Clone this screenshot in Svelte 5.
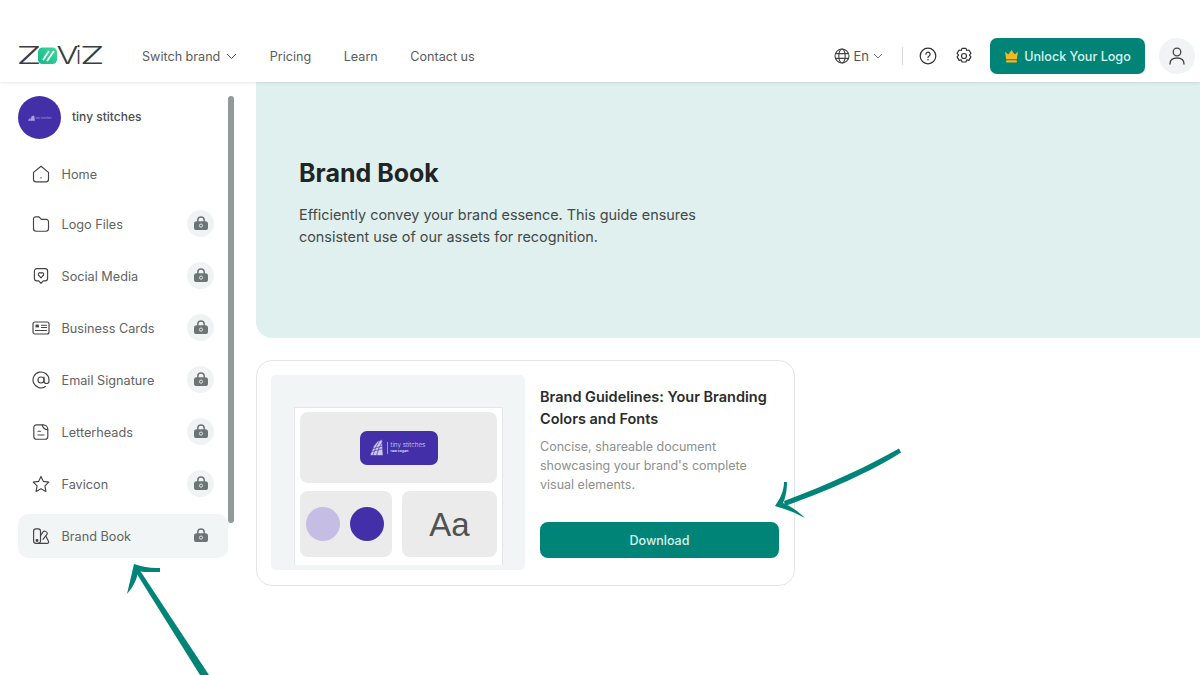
<script>
  const items = [
    { label: 'Home', icon: 'home', locked: false },
    { label: 'Logo Files', icon: 'folder', locked: true },
    { label: 'Social Media', icon: 'social', locked: true },
    { label: 'Business Cards', icon: 'card', locked: true },
    { label: 'Email Signature', icon: 'at', locked: true },
    { label: 'Letterheads', icon: 'letter', locked: true },
    { label: 'Favicon', icon: 'star', locked: true },
    { label: 'Brand Book', icon: 'book', locked: true, active: true }
  ];
</script>

<div class="page">
  <header class="topbar">
    <div class="left">
      <svg class="logo" width="92" height="30" viewBox="-3 -5 92 30" aria-label="ZOVIZ">
        <defs>
          <linearGradient id="lg" x1="0" y1="1" x2="1" y2="0">
            <stop offset="0" stop-color="#12b98a" />
            <stop offset="1" stop-color="#3fd79c" />
          </linearGradient>
        </defs>
        <text x="-1.500" y="18" class="logotext" textLength="25" lengthAdjust="spacingAndGlyphs">Z</text>
        <rect x="20" y="1.500" width="19" height="16.500" rx="4.500" fill="url(#lg)" />
        <path d="M25 14 L31 5 M29 15 L36 5" stroke="#fff" stroke-width="1.800" fill="none" />
        <text x="38.500" y="18" class="logotext" textLength="22" lengthAdjust="spacingAndGlyphs">V</text>
        <text x="58" y="18" class="logotext" textLength="5" lengthAdjust="spacingAndGlyphs">i</text>
        <text x="62" y="18" class="logotext" textLength="24.500" lengthAdjust="spacingAndGlyphs">Z</text>
      </svg>
      <nav class="nav">
        <span class="navitem switch">Switch brand
          <svg width="11" height="7" viewBox="0 0 11 7"><path d="M1 1l4.500 4.500L10 1" fill="none" stroke="#555" stroke-width="1" /></svg>
        </span>
        <span class="navitem">Pricing</span>
        <span class="navitem">Learn</span>
        <span class="navitem">Contact us</span>
      </nav>
    </div>
    <div class="right">
      <span class="lang">
        <svg width="16" height="16" viewBox="0 0 16 16" fill="none" stroke="#444" stroke-width="1.100"><circle cx="8" cy="8" r="7" /><ellipse cx="8" cy="8" rx="3.200" ry="7" /><path d="M1.400 5.600h13.200M1.400 10.400h13.200" /></svg>
        <span>En</span>
        <svg width="10" height="6" viewBox="0 0 10 6"><path d="M1 1l4 4 4-4" fill="none" stroke="#777" stroke-width="1" /></svg>
      </span>
      <span class="divider"></span>
      <svg class="help" width="18" height="18" viewBox="0 0 18 18" fill="none" stroke="#333" stroke-width="1.200"><circle cx="9" cy="9" r="7.800" /><path d="M6.900 7.200a2.100 2.100 0 1 1 3.200 1.800c-.7.400-1.100.8-1.100 1.600" stroke-linecap="round" /><circle cx="9" cy="12.800" r=".5" fill="#333" stroke-width=".5" /></svg>
      <svg class="gear" width="20" height="20" viewBox="0 0 24 24" fill="none" stroke="#333" stroke-width="1.400" stroke-linejoin="round"><circle cx="12" cy="12" r="3" /><path d="M9.600 2.800h4.800l.9 2.600 2.600-.6 2.400 4.100-1.800 2.100 1.800 2.100-2.400 4.100-2.600-.6-.9 2.600H9.600l-.9-2.600-2.600.6-2.400-4.100 1.800-2.100-1.800-2.100 2.400-4.100 2.600.6z" /></svg>
      <button class="unlock">
        <svg width="15" height="14" viewBox="0 0 14 13"><path d="M1 2.500l3 2.700L7 .8l3 4.400 3-2.700-1 7H2z" fill="#f5b81f" /><rect x="2" y="10.400" width="10" height="2.200" rx=".6" fill="#f5b81f" /></svg>
        Unlock Your Logo
      </button>
      <span class="user">
        <svg width="16" height="18" viewBox="0 0 16 18" fill="none" stroke="#444" stroke-width="1.300"><circle cx="8" cy="5" r="3.800" /><path d="M1 17c0-4 3-6 7-6s7 2 7 6" stroke-linecap="round" /></svg>
      </span>
    </div>
  </header>

  <div class="body">
    <aside class="sidebar">
      <div class="thumb"></div>
      <div class="brand">
        <div class="avatar">
          <svg width="7" height="6" viewBox="0 0 8 6"><path d="M0 6l1-2 2-1v3zM3 6l1-5 3-1 1 6z" fill="#a9a0e0" /></svg>
          <span class="avatartext">tiny stitches</span>
        </div>
        <span class="brandname">tiny stitches</span>
      </div>
      <ul class="menu">
        {#each items as item}
          <li class="row" class:active={item.active} class:home={item.icon === 'home'}>
            <svg class="ico" width="18" height="18" viewBox="0 0 18 18" fill="none" stroke="#444" stroke-width="1.150" stroke-linejoin="round" stroke-linecap="round">
              {#if item.icon === 'home'}
                <path d="M1.500 7.400L9 1.200l7.500 6.200v6.800a2.600 2.600 0 0 1-2.600 2.600H4.100a2.600 2.600 0 0 1-2.600-2.600z" /><path d="M9 12.600v.4" />
              {:else if item.icon === 'folder'}
                <path d="M1.500 4a2.200 2.200 0 0 1 2.200-2.200h3.300l2.300 2.600h5a2.200 2.200 0 0 1 2.200 2.200v7a2.600 2.600 0 0 1-2.600 2.600H4.100a2.600 2.600 0 0 1-2.600-2.600z" />
              {:else if item.icon === 'social'}
                <path d="M4.800 1.600h8.400a2.400 2.400 0 0 1 2.400 2.400v7.400a2.400 2.400 0 0 1-2.400 2.400h-1.900L9 16.400l-2.300-2.600H4.800a2.400 2.400 0 0 1-2.400-2.400V4a2.400 2.400 0 0 1 2.400-2.400z" /><path d="M9 10.800L6.400 8a1.600 1.600 0 0 1 2.600-1.800A1.600 1.600 0 0 1 11.600 8z" />
              {:else if item.icon === 'card'}
                <rect x="1" y="3" width="16" height="12" rx="2" /><rect x="3.500" y="5.600" width="3.400" height="2.800" fill="#444" stroke="none" /><path d="M9.500 6.200h5M9.500 8.500h5M3.500 11.500h11" />
              {:else if item.icon === 'at'}
                <circle cx="9" cy="9" r="3" /><path d="M12 6v4a2.500 2.500 0 0 0 5 0V9a8 8 0 1 0-3.500 6.600" />
              {:else if item.icon === 'letter'}
                <path d="M4.400 1.800h5.800c.4 2.600 2.400 4.600 5.600 5v6.600a2.800 2.800 0 0 1-2.800 2.800H4.600a2.800 2.800 0 0 1-2.800-2.800V4.400a2.600 2.600 0 0 1 2.600-2.600z" /><path d="M10.200 1.800h1a4.600 4.600 0 0 1 4.600 4.600v.4" /><path d="M6 8.200h2.500M6 12h6" />
              {:else if item.icon === 'star'}
                <path d="M9 1.400l2.400 5 5.400.7-3.900 3.800 1 5.500L9 13.800l-4.900 2.600 1-5.500L1.200 7.100l5.400-.7z" />
              {:else}
                <path d="M5.900 16.400H4a2.400 2.400 0 0 1-2.400-2.400V4.100A2.300 2.300 0 0 1 3.900 1.800h2.300a2.300 2.300 0 0 1 2.300 2.300v9.900a2.400 2.400 0 0 1-2.600 2.400z" /><path d="M8.500 8.600l2.800-3.900a1.600 1.600 0 0 1 2.300-.3l1 .7a1.600 1.600 0 0 1 .3 2.300L11 12.300" /><path d="M5.900 16.400h9.400a1.400 1.400 0 0 0 1.200-2.100L13.900 9.200" /><circle cx="5" cy="13.400" r=".9" fill="#444" />
              {/if}
            </svg>
            <span class="label">{item.label}</span>
            {#if item.locked}
              <span class="lock">
                <svg width="14" height="14" viewBox="0 0 14 14"><path d="M3.800 6.500V4.200a3.200 3.200 0 0 1 6.400 0V6.500" fill="none" stroke="#6d7476" stroke-width="1.500" /><rect x="0" y="5.300" width="14" height="8.700" rx="2.600" fill="#6d7476" /><circle cx="7" cy="9.600" r="1.600" fill="none" stroke="#dfe4e5" stroke-width="1" /></svg>
              </span>
            {/if}
          </li>
        {/each}
      </ul>
    </aside>

    <main class="main">
      <section class="hero">
        <h1>Brand Book</h1>
        <p>Efficiently convey your brand essence. This guide ensures consistent use of our assets for recognition.</p>
      </section>

      <section class="card">
        <div class="preview">
          <div class="paper">
            <div class="tile logotile">
              <div class="chip">
                <svg width="15" height="19" viewBox="0 0 16 19" fill="#cfc9f2" stroke="#4330a8" stroke-width=".7"><path d="M1 18L5 8l4-5 5-2 1 17z" /><path d="M4 18l4-10 3-5M8 18l3-9 3-5M2 14l12-3M3 11l11-3" fill="none" /></svg>
                <span class="sep"></span>
                <span class="chiptext"><span class="c1">tiny stitches</span><span class="c2">raw cogan</span></span>
              </div>
            </div>
            <div class="bottomtiles">
              <div class="tile swatches">
                <span class="dot light"></span>
                <span class="dot dark"></span>
              </div>
              <div class="tile aa">Aa</div>
            </div>
          </div>
        </div>
        <div class="info">
          <h2>Brand Guidelines: Your Branding Colors and Fonts</h2>
          <p>Concise, shareable document showcasing your brand's complete visual elements.</p>
          <button class="download">Download</button>
        </div>
      </section>
    </main>
  </div>

  <svg class="arrows" width="1200" height="675" viewBox="0 0 1200 675" fill="#018478">
    <path d="M899 448.500 C870 465 830 484 784 501 L785 506 C830 490 872 471 901 452.500 Z" />
    <path d="M784 482 L787 482 C787 492 785 499 783 503 C792 507 799 512 805 518 C796 513 786 509 775 506 C780 499 784 491 784 482 Z" />
    <path d="M209 675 L139 569 L135 571 L200 675 Z" />
    <path d="M134 564 L127 594 C133 587 137 580 138 571 C145 572.500 152 572 160 572 L160 568 C151 568.500 143 567 134 564 Z" />
  </svg>
</div>

<style>
  :global(body) {
    margin: 0;
    background: #fff;
    font-family: Inter, "Liberation Sans", sans-serif;
  }
  * {
    box-sizing: border-box;
  }
  .page {
    position: relative;
    width: 1200px;
    height: 675px;
    overflow: hidden;
    background: #fff;
    display: flex;
    flex-direction: column;
  }
  .topbar {
    height: 82px;
    flex: none;
    padding: 30px 5px 0 15px;
    display: flex;
    justify-content: space-between;
    align-items: center;
    position: relative;
    z-index: 1;
    box-shadow: 0 1px 3px rgba(0, 0, 0, 0.1);
    background: #fff;
    color: #555;
  }
  .left, .right, .nav, .lang, .navitem {
    display: flex;
    align-items: center;
  }
  .logo {
    margin-right: 35px;
  }
  .logotext {
    font-family: Inter, sans-serif;
    font-size: 24px;
    font-weight: 300;
    fill: #3a3d3d;
  }
  .nav {
    gap: 32.500px;
    font-size: 12.600px;
    color: #585c5c;
  }
  .switch {
    gap: 6px;
  }
  .lang {
    font-size: 13px;
    gap: 4px;
    color: #555;
    margin-right: 19px;
  }
  .divider {
    width: 1px;
    height: 18px;
    background: #d6d9d9;
    margin-right: 16px;
  }
  .help {
    margin-right: 17px;
  }
  .gear {
    margin-right: 16px;
  }
  .unlock {
    width: 155px;
    height: 36px;
    background: #018478;
    border: none;
    border-radius: 7px;
    color: #d9f3ee;
    font: 500 12.600px Inter, sans-serif;
    display: flex;
    align-items: center;
    justify-content: center;
    gap: 5px;
    margin-right: 14px;
  }
  .user {
    width: 36px;
    height: 36px;
    border-radius: 50%;
    background: #f1f4f4;
    display: flex;
    align-items: center;
    justify-content: center;
  }
  .body {
    display: flex;
    flex: 1;
    min-height: 0;
  }
  .sidebar {
    width: 256px;
    flex: none;
    padding: 14px 0 0 18px;
    position: relative;
  }
  .thumb {
    position: absolute;
    left: 228px;
    top: 14px;
    width: 6px;
    height: 427px;
    border-radius: 3px;
    background: #929a99;
  }
  .brand {
    display: flex;
    align-items: center;
    gap: 11px;
    height: 43px;
    margin-bottom: 13px;
  }
  .avatar {
    width: 43px;
    height: 43px;
    border-radius: 50%;
    background: #4330a8;
    display: flex;
    align-items: center;
    justify-content: center;
    gap: 1px;
  }
  .avatartext {
    font-size: 2.800px;
    color: #a9a0e0;
    white-space: nowrap;
  }
  .brandname {
    font-size: 12px;
    font-weight: 500;
    color: #4a4d4d;
    margin-bottom: 2px;
  }
  .menu {
    list-style: none;
    margin: 0;
    padding: 0;
    width: 210px;
    display: flex;
    flex-direction: column;
    gap: 8px;
  }
  .row {
    height: 44px;
    display: flex;
    align-items: center;
    padding: 0 14px;
    border-radius: 10px;
    font-size: 12.700px;
    color: #5f6363;
  }
  .row.home {
    margin-bottom: -2px;
  }
  .row.active {
    background: #f1f5f6;
  }
  .ico {
    flex: none;
    margin-right: 11.500px;
  }
  .label {
    flex: 1;
  }
  .lock {
    width: 27px;
    height: 27px;
    margin-bottom: 2px;
    border-radius: 50%;
    background: #f0f3f4;
    display: flex;
    align-items: center;
    justify-content: center;
  }
  .active .lock {
    background: transparent;
  }
  .main {
    flex: 1;
    min-width: 0;
  }
  .hero {
    height: 256px;
    background: #dff0ef;
    border-bottom-left-radius: 16px;
    padding: 74px 0 0 43px;
  }
  h1 {
    margin: 0 0 14px;
    font-size: 25px;
    line-height: 34px;
    font-weight: 700;
    color: #212424;
  }
  .hero p {
    margin: 0;
    width: 440px;
    font-size: 14.400px;
    line-height: 22px;
    color: #454848;
  }
  .card {
    margin-top: 22px;
    width: 539px;
    height: 226px;
    border: 1px solid #e3e6e6;
    border-radius: 16px;
    padding: 14px;
    display: flex;
    gap: 15px;
  }
  .preview {
    width: 254px;
    height: 195px;
    flex: none;
    background: #f1f5f6;
    border-radius: 5px;
    padding: 32px 22px 5px 23px;
  }
  .paper {
    height: 158px;
    background: #fff;
    border: 1px solid #e4e7e7;
    border-bottom: none;
    padding: 4px 5px 0 5px;
  }
  .tile {
    background: #ebebeb;
    border-radius: 8px;
  }
  .logotile {
    height: 71px;
    display: flex;
    align-items: center;
    justify-content: center;
  }
  .chip {
    width: 78px;
    height: 34px;
    background: #4330a8;
    border-radius: 7px;
    display: flex;
    align-items: center;
    padding-left: 9px;
    gap: 3px;
  }
  .sep {
    width: 1px;
    height: 12px;
    background: #9d93d8;
  }
  .chiptext {
    display: flex;
    flex-direction: column;
    line-height: 6px;
    color: #d9d4f5;
  }
  .c1 {
    font-size: 6.300px;
    font-weight: 300;
    white-space: nowrap;
  }
  .c2 {
    font-size: 3.500px;
    font-weight: 700;
    white-space: nowrap;
  }
  .bottomtiles {
    display: flex;
    gap: 10px;
    margin-top: 8px;
  }
  .swatches {
    width: 92px;
    height: 66px;
    display: flex;
    align-items: center;
    padding-left: 6px;
    gap: 10px;
  }
  .dot {
    width: 34px;
    height: 34px;
    border-radius: 50%;
  }
  .light {
    background: #c5bde4;
  }
  .dark {
    background: #4330a8;
  }
  .aa {
    width: 95px;
    height: 66px;
    padding-top: 2px;
    display: flex;
    align-items: center;
    justify-content: center;
    font-family: "Liberation Sans", sans-serif;
    font-size: 33px;
    color: #505252;
  }
  .info {
    width: 239px;
    padding-top: 11px;
  }
  h2 {
    margin: 0 0 7px;
    font-size: 14.500px;
    line-height: 22px;
    font-weight: 600;
    color: #2a2c2c;
  }
  .info p {
    margin: 0 0 28px;
    font-size: 12.500px;
    line-height: 19px;
    color: #8b8f8f;
  }
  .download {
    width: 239px;
    height: 36px;
    border: none;
    border-radius: 8px;
    background: #018478;
    color: #d9f3ee;
    font: 500 12.500px Inter, sans-serif;
  }
  .arrows {
    position: absolute;
    left: 0;
    top: 0;
    z-index: 2;
    pointer-events: none;
  }
</style>
